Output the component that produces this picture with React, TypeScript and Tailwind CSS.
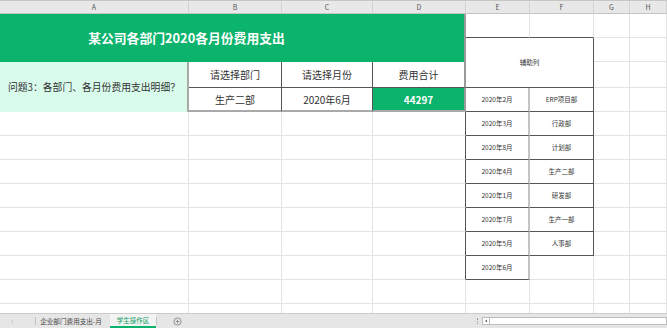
import React from "react";

const L = "border-r border-b border-[#e3e3e3]";
const rowStarts = ["row-start-5", "row-start-6", "row-start-7", "row-start-8", "row-start-9", "row-start-10", "row-start-11", "row-start-12"];
const allRows = ["row-start-2", "row-start-3", "row-start-4", "row-start-5", "row-start-6", "row-start-7", "row-start-8", "row-start-9", "row-start-10", "row-start-11", "row-start-12", "row-start-13", "row-start-14"];

const list: [string, string][] = [
  ["2020年2月", "ERP项目部"],
  ["2020年3月", "行政部"],
  ["2020年8月", "计划部"],
  ["2020年4月", "生产二部"],
  ["2020年1月", "研发部"],
  ["2020年7月", "生产一部"],
  ["2020年5月", "人事部"],
  ["2020年6月", ""],
];

function Cell({ cls, children }: { cls: string; children?: React.ReactNode }) {
  return <div className={`flex items-center justify-center overflow-hidden whitespace-nowrap ${cls}`}>{children}</div>;
}

export default function App() {
  const headers = [
    ["A", "col-start-1"],
    ["B", "col-start-2"],
    ["C", "col-start-3"],
    ["D", "col-start-4"],
    ["E", "col-start-5"],
    ["F", "col-start-6"],
    ["G", "col-start-7"],
    ["H", "col-start-8"],
  ];

  const cells: React.ReactNode[] = [];

  headers.forEach(([h, c]) => {
    cells.push(
      <Cell key={"h" + h} cls={`${c} row-start-1 bg-[#e8e8e8] border-r border-r-[#d2d2d2] border-b border-b-[#c4c4c4] text-[7px] text-[#555] leading-none`}>
        {h}
      </Cell>
    );
  });

  cells.push(
    <Cell key="title" cls="col-start-1 col-span-3 row-start-2 row-span-2 bg-[#0bb36c] text-white font-bold text-[12.8px]">
      某公司各部门2020各月份费用支出
    </Cell>
  );
  cells.push(<Cell key="dgreen" cls="col-start-4 row-start-2 row-span-2 bg-[#0bb36c] border-r-2 border-r-[#9a9a9a]" />);

  cells.push(<Cell key="e2" cls="col-start-5 row-start-2 border-r border-r-[#e3e3e3] border-b border-b-[#555]" />);
  cells.push(<Cell key="f2" cls="col-start-6 row-start-2 border-r border-r-[#e3e3e3] border-b border-b-[#555]" />);

  cells.push(
    <Cell key="aux" cls="col-start-5 col-span-2 row-start-3 row-span-2 border-r border-b border-[#555] text-[6.5px] text-[#333]">
      辅助列
    </Cell>
  );

  cells.push(
    <div key="q" className="col-start-1 row-start-4 row-span-2 flex items-center pl-[8px] bg-[#d9fbec] border-r-2 border-r-[#a9a9a9] text-[9.8px] text-[#333] whitespace-nowrap">
      问题3：各部门、各月份费用支出明细？
    </div>
  );

  cells.push(<Cell key="b4" cls="col-start-2 row-start-4 border-r border-b border-[#555] text-[10px] text-[#333]">请选择部门</Cell>);
  cells.push(<Cell key="c4" cls="col-start-3 row-start-4 border-r border-b border-[#555] text-[10px] text-[#333]">请选择月份</Cell>);
  cells.push(<Cell key="d4" cls="col-start-4 row-start-4 border-b border-b-[#555] border-r-2 border-r-[#9a9a9a] text-[10px] text-[#333]">费用合计</Cell>);
  cells.push(<Cell key="b5" cls="col-start-2 row-start-5 border-r border-r-[#555] border-b-2 border-b-[#a9a9a9] text-[10px] text-[#333]">生产二部</Cell>);
  cells.push(<Cell key="c5" cls="col-start-3 row-start-5 border-r border-r-[#555] border-b-2 border-b-[#a9a9a9] text-[10px] text-[#333]">2020年6月</Cell>);
  cells.push(<Cell key="d5" cls="col-start-4 row-start-5 bg-[#0bb36c] border-r-2 border-r-[#9a9a9a] border-b-2 border-b-[#a9a9a9] text-[10px] font-bold text-white">44297</Cell>);

  list.forEach(([m, d], i) => {
    const r = rowStarts[i];
    cells.push(
      <Cell key={"e" + i} cls={`col-start-5 ${r} border-r-2 border-r-[#c3c3c3] border-b border-b-[#555] text-[6.5px] text-[#333]`}>
        {m}
      </Cell>
    );
    if (d) {
      cells.push(
        <Cell key={"f" + i} cls={`col-start-6 ${r} border-r border-b border-[#555] text-[6.5px] text-[#333]`}>
          {d}
        </Cell>
      );
    } else {
      cells.push(<Cell key={"f" + i} cls={`col-start-6 ${r} ${L}`} />);
    }
  });

  ["row-start-6", "row-start-7", "row-start-8", "row-start-9", "row-start-10", "row-start-11", "row-start-12"].forEach((r, i) => {
    cells.push(<Cell key={"dd" + i} cls={`col-start-4 ${r} border-r border-r-[#555] border-b border-b-[#e3e3e3]`} />);
  });
  cells.push(<Cell key="d13" cls={`col-start-4 row-start-13 ${L}`} />);
  cells.push(<Cell key="d14" cls={`col-start-4 row-start-14 ${L}`} />);

  cells.push(<Cell key="e13" cls={`col-start-5 row-start-13 ${L}`} />);
  cells.push(<Cell key="f13" cls={`col-start-6 row-start-13 ${L}`} />);
  cells.push(<Cell key="e14" cls={`col-start-5 row-start-14 ${L}`} />);
  cells.push(<Cell key="f14" cls={`col-start-6 row-start-14 ${L}`} />);

  allRows.slice(4).forEach((r, i) => {
    cells.push(<Cell key={"a" + i} cls={`col-start-1 ${r} ${L}`} />);
    cells.push(<Cell key={"b" + i} cls={`col-start-2 ${r} ${L}`} />);
    cells.push(<Cell key={"c" + i} cls={`col-start-3 ${r} ${L}`} />);
  });

  allRows.forEach((r, i) => {
    cells.push(<Cell key={"g" + i} cls={`col-start-7 ${r} ${L}`} />);
    cells.push(<Cell key={"hh" + i} cls={`col-start-8 ${r} ${L}`} />);
  });

  return (
    <div className="w-[667px] h-[328px] overflow-hidden bg-white flex flex-col font-['Noto_Sans_CJK_SC',sans-serif]">
      <div className="h-[313px] overflow-hidden border-t border-[#c6c6c6]">
        <div className="grid grid-cols-[189px_93px_91px_93px_64px_64px_36px_37px] grid-rows-[13px_24px_24px_26px_24px_24px_24px_24px_24px_24px_24px_24px_24px_24px]">
          {cells}
        </div>
      </div>
      <div className="h-[15px] flex items-stretch bg-[#e6e6e6] border-t border-[#cbcbcb] text-[#444]">
        <div className="w-[35px] flex items-center pl-[11px] text-[8px] text-[#b0b0b0] leading-none">›</div>
        <div className="w-px my-[3px] bg-[#c4c4c4]" />
        <div className="w-[70px] flex items-center justify-center text-[6.6px] leading-none whitespace-nowrap">企业部门费用支出-月</div>
        <div className="w-[46px] ml-[4px] flex items-center justify-center text-[6.5px] leading-none text-[#0a9d5c] bg-[#f3f3f3] border-b-2 border-[#0bb36c] whitespace-nowrap">
          学生操作区
        </div>
        <div className="w-px my-[3px] bg-[#c4c4c4]" />
        <div className="w-[40px] flex items-center justify-center">
          <svg width="9" height="9" viewBox="0 0 9 9">
            <circle cx="4.5" cy="4.5" r="3.6" fill="none" stroke="#888" strokeWidth="0.9" />
            <path d="M4.5 2.7v3.6M2.7 4.5h3.6" stroke="#888" strokeWidth="0.9" />
          </svg>
        </div>
        <div className="flex-1" />
        <div className="w-[9px] flex items-center justify-center">
          <div className="w-[2px] h-[6px] border-l border-dotted border-[#999]" />
        </div>
        <div className="w-[185px] flex items-center">
          <div className="w-full h-[8px] bg-white border border-[#bdbdbd] flex">
            <div className="w-[7px] h-full border-r border-[#bdbdbd] flex items-center justify-center">
              <svg width="4" height="4" viewBox="0 0 4 4">
                <path d="M3 0.5L1 2l2 1.5z" fill="#666" />
              </svg>
            </div>
          </div>
        </div>
      </div>
    </div>
  );
}
